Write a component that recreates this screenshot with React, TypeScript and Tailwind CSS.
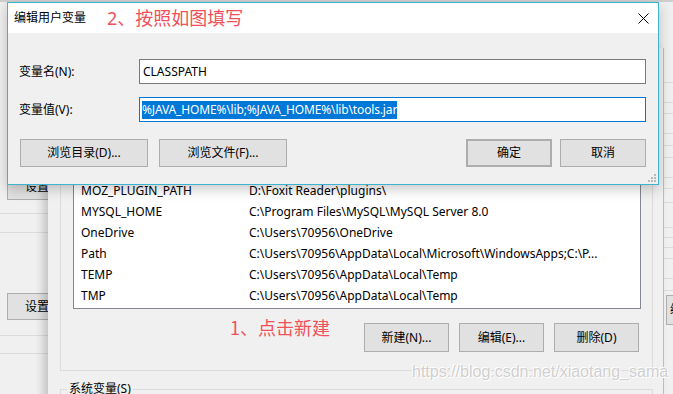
// 编辑用户变量 — Windows 环境变量对话框截图
const rows = [
  ['MOZ_PLUGIN_PATH', 'D:\\Foxit Reader\\plugins\\'],
  ['MYSQL_HOME', 'C:\\Program Files\\MySQL\\MySQL Server 8.0'],
  ['OneDrive', 'C:\\Users\\70956\\OneDrive'],
  ['Path', 'C:\\Users\\70956\\AppData\\Local\\Microsoft\\WindowsApps;C:\\P...'],
  ['TEMP', 'C:\\Users\\70956\\AppData\\Local\\Temp'],
  ['TMP', 'C:\\Users\\70956\\AppData\\Local\\Temp'],
];

function WinButton({ label, className = '' }: { label: string; className?: string }) {
  return (
    <div className={`flex items-center justify-center bg-[#e1e1e1] border border-[#adadad] text-[12px] text-black ${className}`}>
      {label}
    </div>
  );
}

function SystemPropsBehind() {
  return (
    <div className="absolute inset-0 bg-[#f0f0f0]">
      <div className="h-[2px] bg-[#cfcfcf]" />
      <div className="flex">
        <div className="w-[48px] flex flex-col">
          <div className="mt-[171px] ml-[7px] h-[27px] w-[60px] bg-[#e1e1e1] border border-[#adadad] text-[12px] pl-[17px] leading-[25px]">设置</div>
          <div className="mt-[13px] h-px bg-[#dcdcdc]" />
          <div className="mt-[18px] h-px bg-[#dcdcdc]" />
          <div className="mt-[60px] ml-[7px] h-[27px] w-[60px] bg-[#e1e1e1] border border-[#adadad] text-[12px] pl-[17px] leading-[25px]">设置</div>
          <div className="mt-[15px] h-px bg-[#dcdcdc]" />
          <div className="mt-[17px] h-px bg-[#dcdcdc]" />
        </div>
        <div className="flex-1" />
        <div className="w-[9px] flex flex-col">
          <div className="mt-[80px] h-px bg-[#dcdcdc]" />
          <div className="mt-[19px] h-px bg-[#dcdcdc]" />
          <div className="mt-[10px] h-px bg-[#dcdcdc]" />
          <div className="mt-[19px] h-px bg-[#dcdcdc]" />
          <div className="mt-[11px] h-px bg-[#dcdcdc]" />
          <div className="mt-[11px] h-px bg-[#dcdcdc]" />
          <div className="mt-[19px] h-px bg-[#dcdcdc]" />
          <div className="mt-[10px] h-px bg-[#dcdcdc]" />
          <div className="mt-[13px] h-px bg-[#dcdcdc]" />
          <div className="mt-[24px] h-px bg-[#dcdcdc]" />
          <div className="mt-[9px] h-px bg-[#dcdcdc]" />
          <div className="mt-[9px] h-px bg-[#dcdcdc]" />
          <div className="mt-[10px] h-px bg-[#dcdcdc]" />
          <div className="mt-[19px] h-px bg-[#dcdcdc]" />
          <div className="mt-[11px] h-px bg-[#dcdcdc]" />
          <div className="mt-[4px] h-[30px] ml-[2px] bg-[#e1e1e1] border-y border-l border-[#adadad] text-[12px] leading-[28px] pl-[3px] overflow-hidden whitespace-nowrap">编</div>
        </div>
      </div>
    </div>
  );
}

function EnvVarsDialog() {
  return (
    <div className="absolute left-[48px] top-[48px] w-[616px] h-[380px] bg-[#f0f0f0] border-r border-[#bdbdbd] shadow-[-5px_0_8px_rgba(0,0,0,0.18)]">
      <div className="ml-[12px] mr-[10px] mt-[12px] border border-[#dcdcdc] pl-[12px] pr-[11px] pt-[19px] pb-[18px]">
        <div className="h-[229px] bg-white border border-[#828790] flex flex-col justify-end pb-[2px] overflow-hidden">
          {rows.map(([name, value]) => (
            <div key={name} className="flex h-[21px] items-center text-[12px] text-black whitespace-nowrap">
              <div className="w-[175px] pl-[7px]">{name}</div>
              <div>{value}</div>
            </div>
          ))}
        </div>
        <div className="mt-[14px] mr-[2px] flex justify-end gap-[10px]">
          <WinButton label="新建(N)..." className="w-[85px] h-[29px]" />
          <WinButton label="编辑(E)..." className="w-[85px] h-[29px]" />
          <WinButton label="删除(D)" className="w-[85px] h-[29px]" />
        </div>
      </div>
      <div className="relative ml-[12px] mr-[10px] mt-[18px] h-[40px] border border-[#dcdcdc]">
        <div className="absolute -top-[9px] left-[6px] px-[2px] bg-[#f0f0f0] text-[12px] leading-[16px]">系统变量(S)</div>
      </div>
    </div>
  );
}

function EditDialog() {
  return (
    <div className="absolute left-[7px] top-[2px] w-[652px] h-[183px] border border-[#3cb4d0] bg-[#f0f0f0] shadow-[0_4px_12px_rgba(0,0,0,0.22)] flex flex-col">
      <div className="relative h-[30px] bg-white flex items-center pl-[6px]">
        <span className="text-[12px] text-black">编辑用户变量</span>
        <span className="absolute left-[99px] top-[3px] text-[18px] leading-[24px] text-[#f0505a]">2、按照如图填写</span>
        <svg className="absolute right-[9px] top-[10px]" width="11" height="11" viewBox="0 0 11 11">
          <path d="M0.5 0.5 L10.5 10.5 M10.5 0.5 L0.5 10.5" stroke="#000" strokeWidth="1" />
        </svg>
      </div>
      <div className="relative flex-1 pl-[11px] pr-[12px] pt-[26px]">
        <div className="flex items-center h-[25px]">
          <div className="w-[120px] text-[12px] text-black">变量名(N):</div>
          <div className="flex-1 h-[25px] bg-white border border-[#7a7a7a] flex items-center pl-[3px] text-[12px] text-black">CLASSPATH</div>
        </div>
        <div className="flex items-center h-[25px] mt-[13px]">
          <div className="w-[120px] text-[12px] text-black">变量值(V):</div>
          <div className="flex-1 h-[25px] bg-white border border-[#0078d7] flex items-center pl-[2px]">
            <span className="bg-[#0078d7] text-white text-[12px] leading-[18px] tracking-[-0.15px] whitespace-nowrap">%JAVA_HOME%\lib;%JAVA_HOME%\lib\tools.jar</span>
          </div>
        </div>
        <div className="flex mt-[17px] h-[28px]">
          <WinButton label="浏览目录(D)..." className="w-[128px] ml-[1px]" />
          <WinButton label="浏览文件(F)..." className="w-[128px] ml-[11px]" />
          <div className="flex-1" />
          <WinButton label="确定" className="w-[86px] border-2 border-[#0078d7]" />
          <WinButton label="取消" className="w-[86px] ml-[8px]" />
        </div>
        <svg className="absolute right-[2px] bottom-[2px]" width="8" height="8" viewBox="0 0 8 8">
          <rect x="6" y="0" width="2" height="2" fill="#b8b8b8" />
          <rect x="3" y="3" width="2" height="2" fill="#b8b8b8" />
          <rect x="6" y="3" width="2" height="2" fill="#b8b8b8" />
          <rect x="0" y="6" width="2" height="2" fill="#b8b8b8" />
          <rect x="3" y="6" width="2" height="2" fill="#b8b8b8" />
          <rect x="6" y="6" width="2" height="2" fill="#b8b8b8" />
        </svg>
      </div>
    </div>
  );
}

export default function App() {
  return (
    <div className="relative w-[673px] h-[394px] overflow-hidden font-['Noto_Sans','Noto_Sans_CJK_SC',sans-serif] text-black">
      <SystemPropsBehind />
      <EnvVarsDialog />
      <span className="absolute left-[230px] top-[315px] text-[18px] leading-[24px] text-[#f0505a] font-['Noto_Sans_CJK_SC',sans-serif]">1、点击新建</span>
      <span className="absolute left-[412px] top-[362px] text-[16px] leading-[20px] text-[#cfcfcf] font-['Liberation_Sans',sans-serif] [text-shadow:0_0_1px_#fff,1px_1px_0_#fff,-1px_-1px_0_#fff]">https://blog.csdn.net/xiaotang_sama</span>
      <EditDialog />
    </div>
  );
}
